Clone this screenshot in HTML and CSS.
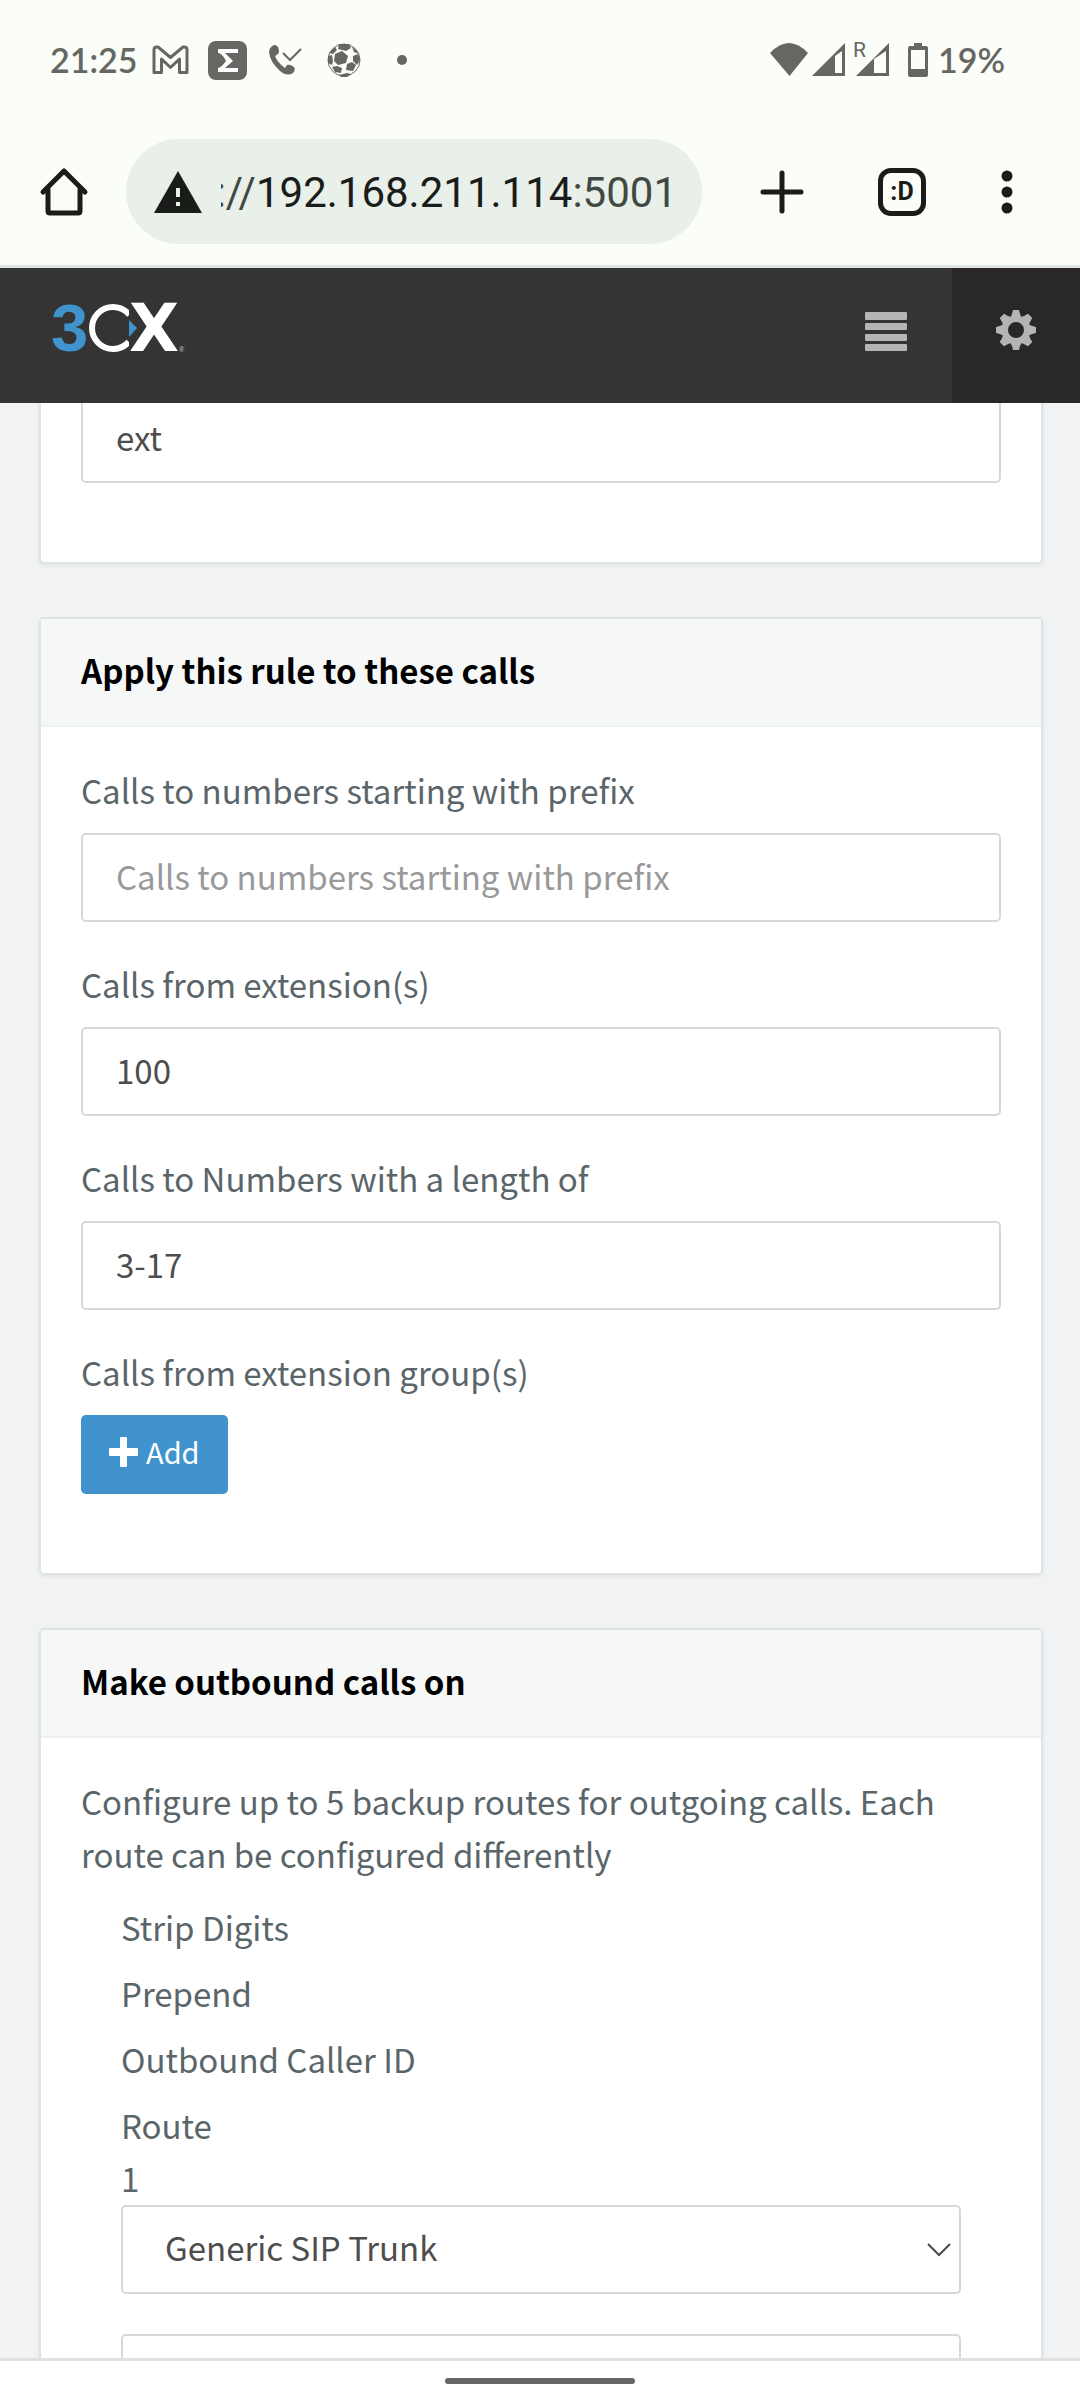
FILE: index.html
```html
<!DOCTYPE html>
<html lang="en">
<head>
<meta charset="utf-8">
<meta name="viewport" content="width=device-width, initial-scale=1">
<title>3CX Outbound Rules</title>
<link rel="stylesheet" href="styles.css">
</head>
<body>
<div class="status">
  <div class="status-left">
    <span class="status-text">21:25</span>
    <svg class="ico-mail" width="37" height="30" viewBox="0 0 37 30" fill="none" stroke="#666762" stroke-width="3" stroke-linejoin="round"><path d="M2 4.500Q2 2 5 2L6 2L18.500 12.500L31 2L32 2Q35 2 35 4.500V27.500H27.500V14L18.500 22.500L9.500 14V27.500H2Z"/></svg>
    <svg class="ico-sigma" width="39" height="39" viewBox="0 0 39 39"><rect width="39" height="39" rx="8" fill="#666762"/><path d="M30 8V12H17L25 20L17 27H30V31H10V27Q13 27 18 20Q14 12 10 12V8Z" fill="#fff"/></svg>
    <svg class="ico-call" width="34" height="32" viewBox="0 0 34 32"><path d="M2 3Q6-1 9 3Q11 8 9 10L6 12Q8 18 16 24L18 21Q21 20 25 23Q27 25 24 29Q18 33 11 27Q1 18 0 8Q0 5 2 3Z" fill="#666762"/><path d="M14 9L21 16L32 5" fill="none" stroke="#666762" stroke-width="2"/></svg>
    <svg class="ico-ball" width="34" height="34" viewBox="0 0 34 34"><circle cx="17" cy="17" r="16" fill="#fbfdf8" stroke="#666762" stroke-width="1"/><g fill="#666762"><path d="M8 11L15 8L21 13L19 20L11 22L7 18Z"/><path d="M12 1H22L24 5L19 8L11 6Z"/><path d="M2 10L8 4L10 7L6 11Z"/><path d="M1 13L5 12L6 18L5 22L1 20Z"/><path d="M5 24L10 23L15 25L14 30L8 29Z"/><path d="M20 21L25 19L29 22L26 28L19 27Z"/><path d="M26 13L31 11L33 17L30 22L26 18Z"/><path d="M25 4L29 7L32 11L27 9Z"/><path d="M12 32L20 30L24 31L20 34H14Z"/></g></svg>
    <span class="dot"></span>
  </div>
  <div class="status-right">
    <svg width="120" height="36" viewBox="770 41 120 36"><g fill="#666762"><path d="M770 52Q789 32 808 52L789.500 75Z"/><path d="M812 75L845 42V75ZM835 55V72H842V50Z" fill-rule="evenodd"/><path d="M856 75L889 42V75ZM874 58V72H886V50Z" fill-rule="evenodd"/></g><text x="853" y="56" class="roam">R</text></svg>
    <svg class="ico-batt" width="20" height="34" viewBox="0 0 20 34"><path d="M6 0H14V3H18Q20 3 20 5V32Q20 34 18 34H2Q0 34 0 32V5Q0 3 2 3H6ZM3 7V26H17V7Z" fill="#666762" fill-rule="evenodd"/></svg>
    <span class="status-text">19%</span>
  </div>
</div>

<div class="toolbar">
  <button class="tool home" aria-label="Home"><svg width="48" height="48" viewBox="0 0 48 48" fill="none" stroke="#191c18" stroke-width="5" stroke-linecap="round" stroke-linejoin="round"><path d="M3 24L24 3L45 24M8 21V43Q8 45 10 45H38Q40 45 40 43V21"/></svg></button>
  <button class="address" aria-label="Address">
    <svg width="48" height="42" viewBox="0 0 48 42"><path d="M24 0L48 42H0Z" fill="#191c18"/><path d="M22 17H26V26H22ZM22 31H26V35H22Z" fill="#e9efe9"/></svg>
    <span class="url">://<b>192.168.211.114</b>:5001</span>
  </button>
  <button class="tool plus" aria-label="New tab"><svg width="44" height="44" viewBox="0 0 44 44" stroke="#191c18" stroke-width="5" stroke-linecap="round"><path d="M22 3V41M3 22H41"/></svg></button>
  <button class="tool tabs" aria-label="Tabs">:D</button>
  <button class="tool more" aria-label="Menu"><svg width="12" height="44" viewBox="0 0 12 44" fill="#191c18"><circle cx="6" cy="6" r="5.500"/><circle cx="6" cy="22" r="5.500"/><circle cx="6" cy="38" r="5.500"/></svg></button>
</div>

<header class="header">
  <a class="logo" href="#" aria-label="3CX"><svg width="134" height="52" viewBox="52 302 134 52">
    <clipPath id="cut"><path d="M80 300H129V356H80Z"/></clipPath>
    <text x="51" y="351" class="logo-three">3</text>
    <circle cx="113" cy="328" r="21" fill="none" stroke="#fff" stroke-width="6" clip-path="url(#cut)" stroke-dasharray="102 30" stroke-dashoffset="-15"/>
    <path d="M129 320L137 328L129 337Z" fill="#4193ce"/>
    <text x="129" y="351" class="logo-x">X</text>
    <text x="179" y="352" class="logo-r">®</text>
  </svg></a>
  <button class="head-btn" aria-label="Menu"><svg width="42" height="40" viewBox="0 0 42 40" fill="#b5b5b5"><rect width="42" height="8" rx="1"/><rect y="11" width="42" height="7" rx="1"/><rect y="22" width="42" height="7" rx="1"/><rect y="32" width="42" height="7" rx="1"/></svg></button>
  <button class="head-btn gear" aria-label="Settings"><svg width="42" height="42" viewBox="-21 -21 42 42" fill="#b5b3b3"><path fill-rule="evenodd" d="M-14 0A14 14 0 1 0 14 0A14 14 0 1 0-14 0ZM-8 0A8 8 0 1 1 8 0A8 8 0 1 1-8 0Z"/><g id="t"><path id="p" d="M-6-12Q-4-15-3 -20H3Q4-15 6-12ZM-6 12Q-4 15-3 20H3Q4 15 6 12Z"/><use href="#p" transform="rotate(90)"/></g><use href="#t" transform="rotate(45)"/></svg></button>
</header>

<main class="content">
  <section class="card card-first">
    <div class="card-body">
      <div class="field"><input class="input" type="text" value="ext" aria-label="Rule name"></div>
    </div>
  </section>

  <section class="card">
    <h2 class="card-title">Apply this rule to these calls</h2>
    <div class="card-body">
      <div class="field"><label for="prefix">Calls to numbers starting with prefix</label><input class="input" id="prefix" type="text" placeholder="Calls to numbers starting with prefix"></div>
      <div class="field"><label for="exts">Calls from extension(s)</label><input class="input" id="exts" type="text" value="100"></div>
      <div class="field"><label for="len">Calls to Numbers with a length of</label><input class="input" id="len" type="text" value="3-17"></div>
      <div class="field"><label for="add">Calls from extension group(s)</label><button class="add" id="add"><svg width="29" height="30" viewBox="0 0 29 30" fill="#fff"><path d="M11 1Q11 0 12 0H17Q18 0 18 1V11H28Q29 11 29 12V18Q29 19 28 19H18V29Q18 30 17 30H12Q11 30 11 29V19H1Q0 19 0 18V12Q0 11 1 11H11Z"/></svg><span>Add</span></button></div>
    </div>
  </section>

  <section class="card">
    <h2 class="card-title">Make outbound calls on</h2>
    <div class="card-body">
      <p class="intro">Configure up to 5 backup routes for outgoing calls. Each route can be configured differently</p>
      <div class="route">
        <ul class="columns">
          <li>Strip Digits</li>
          <li>Prepend</li>
          <li>Outbound Caller ID</li>
          <li>Route</li>
        </ul>
        <label for="trunk">1</label>
        <div class="select-wrap">
          <select class="input select" id="trunk"><option>Generic SIP Trunk</option></select>
          <svg class="chevron" width="24" height="14" viewBox="0 0 24 14" fill="none" stroke="#4a4a4a" stroke-width="2"><path d="M1 1L12 12L23 1"/></svg>
        </div>
        <input class="input" type="text" aria-label="Strip Digits">
      </div>
    </div>
  </section>
</main>

<footer class="navbar"><span class="handle"></span></footer>
</body>
</html>
```
FILE: styles.css
```css
* { box-sizing: border-box; }

body {
  margin: 0;
  height: 100vh;
  display: flex;
  flex-direction: column;
  overflow: hidden;
  background: #f1f2f4;
  color: #5a656a;
  font: 33px/53px "Noto Sans CJK SC", sans-serif;
}

button { border: 0; padding: 0; background: none; font: inherit; color: inherit; }
svg { display: block; flex: none; overflow: visible; }

/* Status bar */
.status {
  flex: none;
  height: 120px;
  padding: 0 75px 0 50px;
  display: flex;
  align-items: center;
  justify-content: space-between;
  background: #fbfdf8;
  color: #666762;
}
.status-left, .status-right { display: flex; align-items: center; }
.status-text { font: 600 34px/40px Lato, sans-serif; }
.ico-mail { margin-left: 14px; }
.ico-sigma { margin-left: 19px; }
.ico-call { margin-left: 22px; }
.ico-ball { margin-left: 24px; }
.dot { width: 10px; height: 10px; margin-left: 36px; border-radius: 50%; background: #666762; }
.roam { font: 21px Roboto, sans-serif; fill: #666762; }
.ico-batt { margin: 0 10px 0 18px; }

/* Browser toolbar */
.toolbar {
  flex: none;
  height: 148px;
  padding: 19px 67px 21px 40px;
  display: flex;
  align-items: center;
  background: #fbfdf8;
  border-bottom: 3px solid #dfe5df;
}
.address {
  flex: 1;
  min-width: 0;
  height: 105px;
  margin: 0 58px 0 38px;
  padding: 0 25px 0 28px;
  display: flex;
  align-items: center;
  gap: 19px;
  border-radius: 53px;
  background: #e9efe9;
}
.url {
  flex: 1;
  min-width: 0;
  display: flex;
  justify-content: flex-end;
  overflow: hidden;
  padding-top: 3px;
  font: 42px/50px Roboto, sans-serif;
  color: #424842;
}
.url b { font-weight: 400; color: #191c18; }
.tabs {
  width: 48px;
  height: 48px;
  margin: 0 75px 0 74px;
  border: 5px solid #191c18;
  border-radius: 13px;
  font: 700 25px/36px Roboto, sans-serif;
  color: #191c18;
}

/* Site header */
.header {
  flex: none;
  height: 135px;
  display: flex;
  align-items: stretch;
  background: #343434;
}
.logo { margin: 34px auto 0 52px; }
.logo-three { font: 700 67px "Liberation Sans", sans-serif; fill: #4193ce; }
.logo-x { font: 700 65px "DejaVu Sans", sans-serif; fill: #fff; }
.logo-r { font: 7px "Liberation Sans", sans-serif; fill: #ccc; }
.head-btn { width: 132px; display: flex; justify-content: center; padding-top: 44px; }
.gear { width: 128px; padding-top: 41px; background: #292728; }

/* Cards */
.content {
  flex: 1;
  min-height: 0;
  overflow: hidden;
  padding: 0 37px 0 39px;
  border-bottom: 3px solid #e0e0e0;
}
.card {
  margin-bottom: 53px;
  border: 2px solid #dee3e5;
  border-radius: 5px;
  background: #fff;
  box-shadow: 0 2px 4px rgba(0, 0, 0, .06);
}
/* The first card is scrolled partly under the header */
.card-first { margin-top: -48px; }
.card-title {
  margin: 0;
  padding: 25px 40px 28px;
  border-bottom: 2px solid #edf1f2;
  background: #f6f8f8;
  font: inherit;
  font-weight: 700;
  color: #000;
}
.card-body { padding: 37px 40px 43px; }
.field { display: flex; flex-direction: column; align-items: flex-start; gap: 16px; margin-bottom: 36px; }
.input {
  display: block;
  width: 100%;
  height: 89px;
  padding: 0 33px 4px;
  border: 2px solid #d3d9dc;
  border-radius: 5px;
  background: #fff;
  font: inherit;
  color: #4d4d4d;
}
.input::placeholder { color: #999; opacity: 1; }
.add {
  height: 79px;
  padding: 0 28px 6px;
  display: flex;
  align-items: center;
  gap: 8px;
  border-radius: 5px;
  background: #4193ce;
  color: #fff;
  font-size: 29px;
}

/* Routes */
.intro { margin: 0 0 20px; }
.route { padding: 0 40px; }
.columns { margin: 0; padding: 0; list-style: none; display: grid; gap: 13px; }
.select-wrap { position: relative; margin-bottom: 40px; }
.route label { display: block; }
.select { appearance: none; padding-left: 42px; }
.chevron { position: absolute; right: 10px; top: 38px; pointer-events: none; }

/* Gesture bar */
.navbar { flex: none; height: 39px; display: flex; justify-content: center; padding-top: 17px; background: #fff; }
.handle { width: 190px; height: 6px; border-radius: 3px; background: #666; }
```
